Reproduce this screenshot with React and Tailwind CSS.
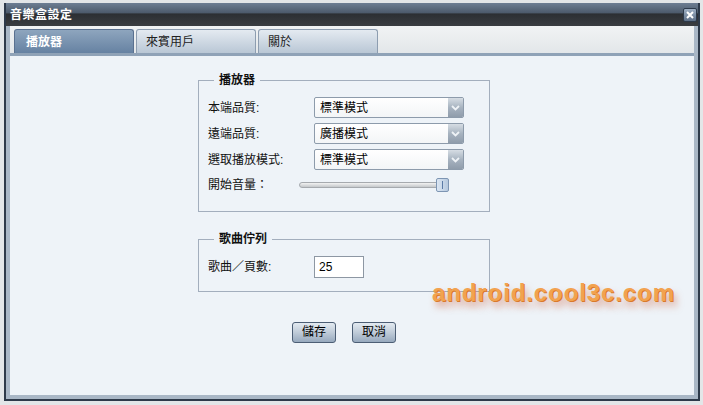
import React from 'react';

const font = { fontFamily: '"Liberation Sans", "Noto Sans CJK TC", sans-serif' };

function Select({ value }) {
  return (
    <div className="flex h-[21px] w-[150px] border border-[#8d9bab] rounded-[2px] bg-[linear-gradient(to_bottom,#ffffff,#f3f5f7)] overflow-hidden">
      <div className="flex-1 pl-[5px] text-[12px] leading-[20px] text-black">{value}</div>
      <div className="w-[15px] flex items-center justify-center bg-[linear-gradient(to_bottom,#d6dde4,#a7b3c0_50%,#8f9cab)]">
        <svg width="9" height="6" viewBox="0 0 9 6">
          <polyline points="1,1 4.5,4.5 8,1" fill="none" stroke="#eef2f6" strokeWidth="1.8" />
        </svg>
      </div>
    </div>
  );
}

function Row({ label, children }) {
  return (
    <div className="flex items-center h-[21px]">
      <div className="w-[106px] text-[12px] text-[#111]">{label}</div>
      {children}
    </div>
  );
}

export default function App() {
  return (
    <div className="w-[703px] h-[405px] bg-[#e3e6e8] pl-[4px] pt-[3px] overflow-hidden" style={font}>
      <div className="w-[696px] h-[398px] flex flex-col border-x-2 border-b-2 border-[#2e3a4a]">
        {/* Title bar */}
        <div className="h-[23px] flex items-center justify-between pl-[4px] pr-[1px] bg-[linear-gradient(to_bottom,#6d7e93_0%,#4d5b6c_42%,#2c2f33_48%,#3a3d41_100%)]">
          <span className="text-white text-[12px] font-bold tracking-[0.5px]">音樂盒設定</span>
          <div className="w-[14px] h-[14px] rounded-[2px] border border-[#2d3a4b] bg-[linear-gradient(to_bottom,#9fb0c4,#5d6f86)] flex items-center justify-center">
            <svg width="8" height="8" viewBox="0 0 8 8">
              <path d="M1 1 L7 7 M7 1 L1 7" stroke="#ffffff" strokeWidth="2" />
            </svg>
          </div>
        </div>

        {/* Body */}
        <div className="flex-1 flex flex-col border-x-4 border-b-4 border-[#a9b7c6]">
          {/* Tabs */}
          <div className="h-[30px] flex flex-col bg-[linear-gradient(to_bottom,#f1f3f4,#e1e5e8)]">
            <div className="flex-1 flex items-end gap-[2px] pl-[4px]">
              <div className="w-[120px] h-[24px] rounded-t-[3px] border border-[#5a7190] border-b-0 bg-[linear-gradient(to_bottom,#8ea5be,#6682a2)] pl-[11px] text-white font-bold text-[12px] leading-[24px]">
                播放器
              </div>
              <div className="w-[120px] h-[24px] rounded-t-[3px] border border-[#8d9db0] border-b-0 bg-[linear-gradient(to_bottom,#e4eaf1,#b9c7d5)] pl-[9px] text-[#222] text-[12px] leading-[24px]">
                來賓用戶
              </div>
              <div className="w-[120px] h-[24px] rounded-t-[3px] border border-[#8d9db0] border-b-0 bg-[linear-gradient(to_bottom,#e4eaf1,#b9c7d5)] pl-[9px] text-[#222] text-[12px] leading-[24px]">
                關於
              </div>
            </div>
            <div className="h-[3px] bg-[#8fa2b7]" />
          </div>

          {/* Content */}
          <div className="flex-1 relative bg-[#eef3f8]">
            <div className="w-[292px] ml-[188px] mt-[16px] flex flex-col">
              <fieldset className="border border-[#a3aebd] pl-[9px] pt-[9px] pb-[19px]">
                <legend className="ml-[6px] px-[5px] text-[12px] leading-[16px] font-bold text-[#111]">播放器</legend>
                <div className="flex flex-col gap-[5px]">
                  <Row label="本端品質:"><Select value="標準模式" /></Row>
                  <Row label="遠端品質:"><Select value="廣播模式" /></Row>
                  <Row label="選取播放模式:"><Select value="標準模式" /></Row>
                </div>
                <div className="flex items-center h-[14px] mt-[8px]">
                  <div className="w-[91px] text-[12px] text-[#111]">開始音量：</div>
                  <div className="relative w-[150px] h-[14px] flex items-center">
                    <div className="w-[142px] h-[6px] rounded-full border border-[#a5a9ae] bg-[linear-gradient(to_bottom,#f2f2f2,#c4c7ca)]" />
                    <div className="absolute left-[137px] top-0 w-[13px] h-[14px] rounded-[2px] border border-[#7d95b3] bg-[linear-gradient(to_right,#dbe6f3,#b5c8de)] flex items-center justify-center">
                      <div className="w-[1px] h-[8px] bg-[#5a7aa6]" />
                    </div>
                  </div>
                </div>
              </fieldset>

              <fieldset className="mt-[19px] border border-[#a3aebd] pl-[9px] pt-[9px] pb-[13px]">
                <legend className="ml-[6px] px-[5px] text-[12px] leading-[16px] font-bold text-[#111]">歌曲佇列</legend>
                <div className="flex items-center h-[22px]">
                  <div className="w-[106px] text-[12px] text-[#111]">歌曲／頁數:</div>
                  <div className="w-[50px] h-[22px] border border-[#8d97a3] bg-white pl-[4px] text-[12px] leading-[21px] text-black">25</div>
                </div>
              </fieldset>

              <div className="mt-[30px] flex justify-center gap-[16px]">
                <button className="w-[44px] h-[21px] rounded-[3px] border border-[#4c5e75] bg-[linear-gradient(to_bottom,#e3eaf1,#bfcbd8_50%,#97a9be)] text-[12px] text-black leading-[19px]">儲存</button>
                <button className="w-[44px] h-[21px] rounded-[3px] border border-[#4c5e75] bg-[linear-gradient(to_bottom,#e3eaf1,#bfcbd8_50%,#97a9be)] text-[12px] text-black leading-[19px]">取消</button>
              </div>
            </div>

            {/* watermark overlay */}
            <div className="absolute left-[422px] top-[219px] text-[24px] font-bold tracking-[0.9px] text-[#f2a24f] [text-shadow:1px_1px_0_#d97a2c,3px_6px_7px_rgba(205,90,50,0.55)]">
              android.cool3c.com
            </div>
          </div>
        </div>
      </div>
    </div>
  );
}
